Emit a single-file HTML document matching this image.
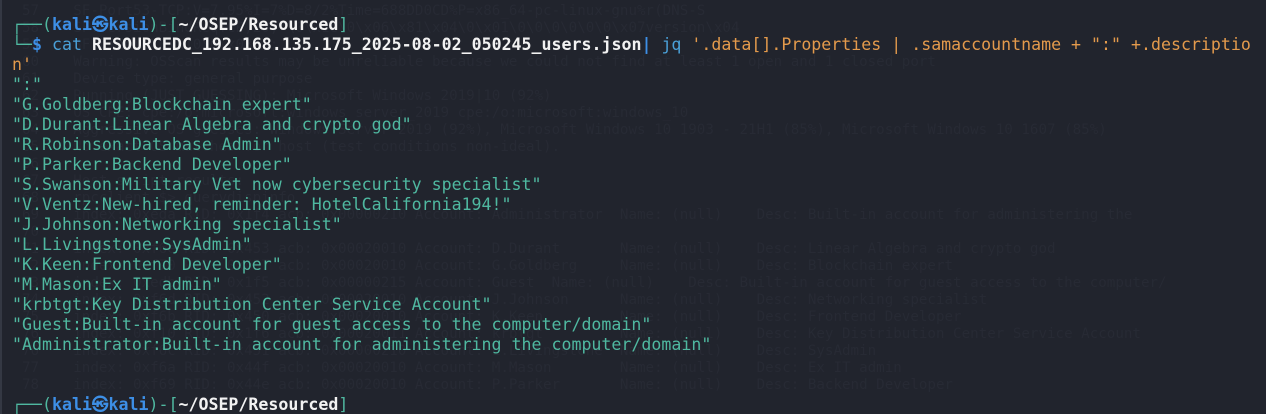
<!DOCTYPE html>
<html><head><meta charset="utf-8">
<style>
html,body{margin:0;padding:0;background:#21242d;width:1266px;height:414px;overflow:hidden}
body{position:relative;border-left:2px solid #343843;box-sizing:border-box}
.ghost{position:absolute;left:20px;top:3px;font:14.2px/17px "DejaVu Sans Mono","Liberation Mono",monospace;color:#272a34;white-space:pre}
.term{position:absolute;left:10px;top:15px;font:16.6px/20px "DejaVu Sans Mono","Liberation Mono",monospace;color:#4fb8a0;white-space:pre}
.b{color:#3d8fe6;font-weight:bold}
.w{color:#f2f2f2;font-weight:bold}
.g{color:#4fb8a0}
.c{color:#4aa0d8}
.o{color:#e39a4c}
.bar{color:#3d8fe6;font-weight:bold}
</style></head><body>
<div class="ghost">57    SF-Port53-TCP:V=7.95%I=7%D=8/2%Time=688DD0CD%P=x86_64-pc-linux-gnu%r(DNS-S
58    SF:VersionBindReqTCP,20,"\0\x1e\0\x06\x81\x04\0\x01\0\0\0\0\0\0\x07version\x04
59    SF:bind\0\0\x10\0\x03");
60    Warning: OSScan results may be unreliable because we could not find at least 1 open and 1 closed port
61    Device type: general purpose
62    Running (JUST GUESSING): Microsoft Windows 2019|10 (92%)
63    OS CPE: cpe:/o:microsoft:windows_server_2019 cpe:/o:microsoft:windows_10
64    Aggressive OS guesses: Windows Server 2019 (92%), Microsoft Windows 10 1903 - 21H1 (85%), Microsoft Windows 10 1607 (85%)
65    No exact OS matches for host (test conditions non-ideal).
66
67    Host script results:
68    rpcclient $&gt; querydispinfo
69    index: 0xeda RID: 0x1f4 acb: 0x00000210 Account: Administrator  Name: (null)    Desc: Built-in account for administering the
70
71    index: 0xf6e RID: 0x453 acb: 0x00020010 Account: D.Durant       Name: (null)    Desc: Linear Algebra and crypto god
72    index: 0xf70 RID: 0x457 acb: 0x00020010 Account: G.Goldberg     Name: (null)    Desc: Blockchain expert
73    index: 0xedb RID: 0x1f5 acb: 0x00000215 Account: Guest  Name: (null)    Desc: Built-in account for guest access to the computer/
74    index: 0xf6d RID: 0x452 acb: 0x00020010 Account: J.Johnson      Name: (null)    Desc: Networking specialist
75    index: 0xf6b RID: 0x450 acb: 0x00020010 Account: K.Keen         Name: (null)    Desc: Frontend Developer
76    index: 0xf10 RID: 0x1f6 acb: 0x00020011 Account: krbtgt         Name: (null)    Desc: Key Distribution Center Service Account
76    index: 0xf6c RID: 0x451 acb: 0x00000210 Account: L.Livingstone  Name: (null)    Desc: SysAdmin
77    index: 0xf6a RID: 0x44f acb: 0x00020010 Account: M.Mason        Name: (null)    Desc: Ex IT admin
78    index: 0xf69 RID: 0x44e acb: 0x00020010 Account: P.Parker       Name: (null)    Desc: Backend Developer</div>
<div class="term"><span class="g">┌──(</span><span class="b">kali㉿kali</span><span class="g">)-[</span><span class="w">~/OSEP/Resourced</span><span class="g">]</span>
<span class="g">└─</span><span class="b">$</span> <span class="c">cat</span> <span class="w">RESOURCEDC_192.168.135.175_2025-08-02_050245_users.json</span><span class="bar">|</span> <span class="c">jq</span> <span class="o">'.data[].Properties | .samaccountname + ":" +.descriptio</span>
<span class="o">n'</span>
":"
"G.Goldberg:Blockchain expert"
"D.Durant:Linear Algebra and crypto god"
"R.Robinson:Database Admin"
"P.Parker:Backend Developer"
"S.Swanson:Military Vet now cybersecurity specialist"
"V.Ventz:New-hired, reminder: HotelCalifornia194!"
"J.Johnson:Networking specialist"
"L.Livingstone:SysAdmin"
"K.Keen:Frontend Developer"
"M.Mason:Ex IT admin"
"krbtgt:Key Distribution Center Service Account"
"Guest:Built-in account for guest access to the computer/domain"
"Administrator:Built-in account for administering the computer/domain"


<span class="g">┌──(</span><span class="b">kali㉿kali</span><span class="g">)-[</span><span class="w">~/OSEP/Resourced</span><span class="g">]</span></div>
</body></html>
